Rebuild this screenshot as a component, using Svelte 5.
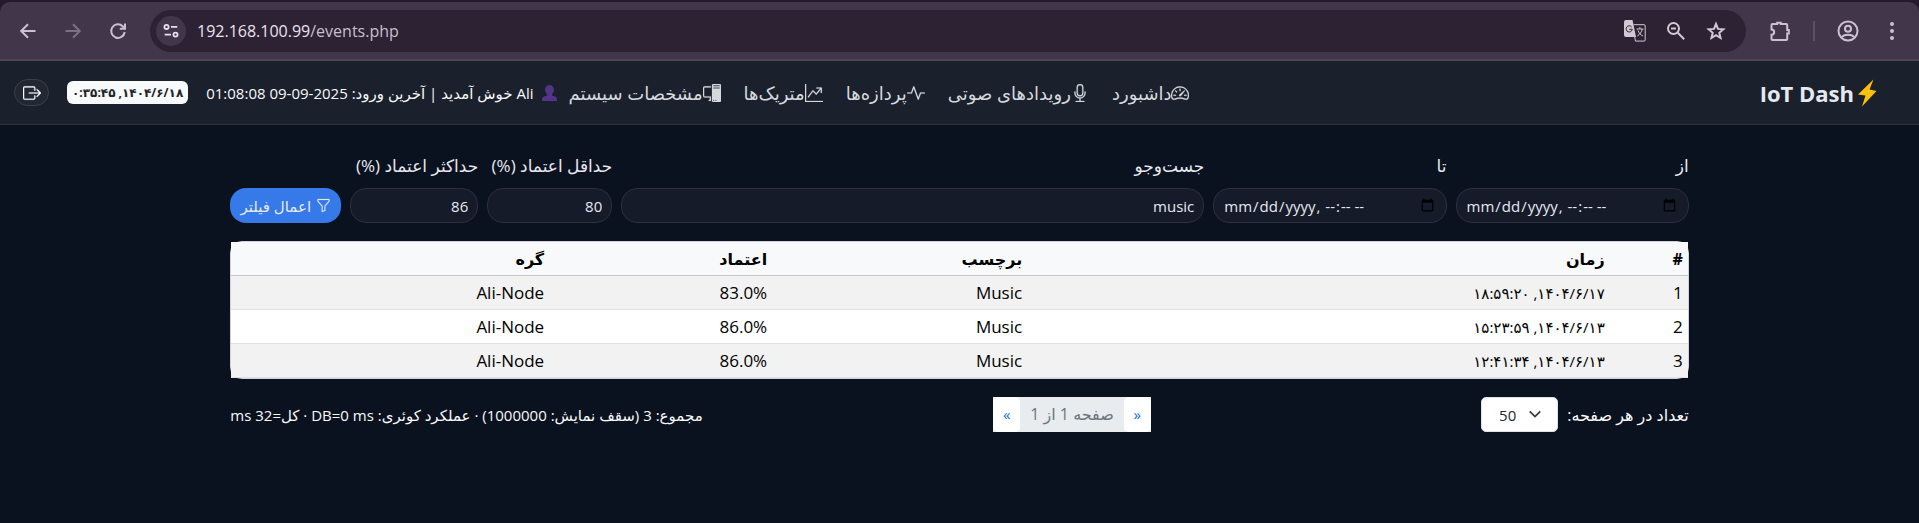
<script>
  const navItems = [
    { label: 'داشبورد', icon: 'speedometer' },
    { label: 'رویدادهای صوتی', icon: 'mic' },
    { label: 'پردازه‌ها', icon: 'activity' },
    { label: 'متریک‌ها', icon: 'graph' },
    { label: 'مشخصات سیستم', icon: 'pc' }
  ];

  const icons = {
    speedometer:
      'M8 4a.5.5 0 0 1 .5.5V6a.5.5 0 0 1-1 0V4.5A.5.5 0 0 1 8 4M3.732 5.732a.5.5 0 0 1 .707 0l.915.914a.5.5 0 1 1-.708.708l-.914-.915a.5.5 0 0 1 0-.707M2 10a.5.5 0 0 1 .5-.5h1.586a.5.5 0 0 1 0 1H2.5A.5.5 0 0 1 2 10m9.5 0a.5.5 0 0 1 .5-.5h1.5a.5.5 0 0 1 0 1H12a.5.5 0 0 1-.5-.5m.754-4.246a.39.39 0 0 0-.527-.02L7.547 9.31a.91.91 0 1 0 1.302 1.258l3.434-4.297a.39.39 0 0 0-.029-.518zM0 10a8 8 0 1 1 15.547 2.661c-.442 1.253-1.845 1.602-2.932 1.25C11.309 13.488 9.475 13 8 13c-1.474 0-3.31.488-4.615.911-1.087.352-2.49.003-2.932-1.25A8 8 0 0 1 0 10m8-7a7 7 0 0 0-6.603 9.329c.203.575.923.876 1.68.63C4.397 12.533 6.358 12 8 12s3.604.532 4.923.96c.757.245 1.477-.056 1.68-.631A7 7 0 0 0 8 3',
    mic: 'M3.5 6.5A.5.5 0 0 1 4 7v1a4 4 0 0 0 8 0V7a.5.5 0 0 1 1 0v1a5 5 0 0 1-4.5 4.975V15h3a.5.5 0 0 1 0 1h-7a.5.5 0 0 1 0-1h3v-2.025A5 5 0 0 1 3 8V7a.5.5 0 0 1 .5-.5M10 8a2 2 0 1 1-4 0V3a2 2 0 1 1 4 0zM8 0a3 3 0 0 0-3 3v5a3 3 0 0 0 6 0V3a3 3 0 0 0-3-3',
    activity:
      'M6 2a.5.5 0 0 1 .47.33L10 12.036l1.53-4.208A.5.5 0 0 1 12 7.5h3.5a.5.5 0 0 1 0 1h-3.15l-1.88 5.17a.5.5 0 0 1-.94 0L6 3.964 4.47 8.171A.5.5 0 0 1 4 8.5H.5a.5.5 0 0 1 0-1h3.15l1.88-5.17A.5.5 0 0 1 6 2',
    graph:
      'M0 0h1v15h15v1H0zm10 3.5a.5.5 0 0 1 .5-.5h4a.5.5 0 0 1 .5.5v4a.5.5 0 0 1-1 0V4.9l-3.613 4.417a.5.5 0 0 1-.74.037L7.06 6.767l-3.656 5.027a.5.5 0 0 1-.808-.588l4-5.5a.5.5 0 0 1 .758-.06l2.609 2.61L13.445 4H10.5a.5.5 0 0 1-.5-.5',
    pc: 'M8 1a1 1 0 0 1 1-1h6a1 1 0 0 1 1 1v14a1 1 0 0 1-1 1H9a1 1 0 0 1-1-1zm1 13.5a.5.5 0 1 0 1 0 .5.5 0 0 0-1 0m2 0a.5.5 0 1 0 1 0 .5.5 0 0 0-1 0M9.5 1a.5.5 0 0 0 0 1h5a.5.5 0 0 0 0-1zM9 3.5a.5.5 0 0 0 .5.5h5a.5.5 0 0 0 0-1h-5a.5.5 0 0 0-.5.5M1.5 2A1.5 1.5 0 0 0 0 3.5v7A1.5 1.5 0 0 0 1.5 12H6v2h-.5a.5.5 0 0 0 0 1H7v-4H1.5a.5.5 0 0 1-.5-.5v-7a.5.5 0 0 1 .5-.5H7V2z',
    logout:
      'M10 12.5a.5.5 0 0 1-.5.5h-8a.5.5 0 0 1-.5-.5v-9a.5.5 0 0 1 .5-.5h8a.5.5 0 0 1 .5.5v2a.5.5 0 0 0 1 0v-2A1.5 1.5 0 0 0 9.5 2h-8A1.5 1.5 0 0 0 0 3.5v9A1.5 1.5 0 0 0 1.5 14h8a1.5 1.5 0 0 0 1.5-1.5v-2a.5.5 0 0 0-1 0zM15.854 8.354a.5.5 0 0 0 0-.708l-3-3a.5.5 0 0 0-.708.708L14.293 7.5H5.5a.5.5 0 0 0 0 1h8.793l-2.147 2.146a.5.5 0 0 0 .708.708z',
    funnel:
      'M1.5 1.5A.5.5 0 0 1 2 1h12a.5.5 0 0 1 .5.5v2a.5.5 0 0 1-.128.334L10 8.692V13.5a.5.5 0 0 1-.342.474l-3 1A.5.5 0 0 1 6 14.5V8.692L1.628 3.834A.5.5 0 0 1 1.5 3.5zm1 .5v1.308l4.372 4.858A.5.5 0 0 1 7 8.5v5.306l2-.666V8.5a.5.5 0 0 1 .128-.334L13.5 3.308V2z'
  };

  const rows = [
    { id: 1, time: '۱۴۰۴/۶/۱۷, ۱۸:۵۹:۲۰', tag: 'Music', confidence: '83.0%', node: 'Ali-Node' },
    { id: 2, time: '۱۴۰۴/۶/۱۳, ۱۵:۲۳:۵۹', tag: 'Music', confidence: '86.0%', node: 'Ali-Node' },
    { id: 3, time: '۱۴۰۴/۶/۱۳, ۱۲:۴۱:۳۴', tag: 'Music', confidence: '86.0%', node: 'Ali-Node' }
  ];

  let search = $state('music');
  let minConfidence = $state('80');
  let maxConfidence = $state('86');
</script>

{#snippet glyph(name)}
  <svg class="glyph" viewBox="0 0 16 16" aria-hidden="true"><path d={icons[name]} /></svg>
{/snippet}

<div class="tabstrip"><div class="tab"></div></div>
<div class="chrome">
  <div class="history">
    <button class="tool" aria-label="Back">
      <svg viewBox="0 0 20 20"><path d="M17.500 10H3.500M10 3.200 3.200 10l6.800 6.800" /></svg>
    </button>
    <button class="tool dim" aria-label="Forward">
      <svg viewBox="0 0 20 20"><path d="M2.500 10h14M10 3.200 16.800 10 10 16.800" /></svg>
    </button>
    <button class="tool" aria-label="Reload">
      <svg viewBox="0 0 20 20"><path d="M16.700 11a6.800 6.800 0 1 1-2-5.800L17 7.500M17 2.500v5.200h-5.200" /></svg>
    </button>
  </div>
  <div class="omnibox">
    <button class="site" aria-label="Site information">
      <svg viewBox="0 0 20 20"><circle cx="5" cy="5.500" r="2.300" /><path d="M10 5.500h7M3 14h7" /><circle cx="15" cy="14" r="2.300" /></svg>
    </button>
    <span class="url">192.168.100.99<i>/events.php</i></span>
    <div class="omni-actions">
      <button class="tool wide" aria-label="Translate">
        <svg viewBox="0 0 22 22">
          <path class="solid" d="M2 0h6.500l3.500 17H2a2 2 0 0 1-2-2V2a2 2 0 0 1 2-2z" />
          <path class="thin" d="M9.500 4.700H20a1.200 1.200 0 0 1 1.200 1.200v14a1.200 1.200 0 0 1-1.200 1.200h-8.500L10.700 17M12.500 9h7M15.900 7v2M18.300 9c-.6 3-2.600 5.500-5 7M14 10.500c1 2.500 2.700 4.500 5 5.500" />
          <path class="cut" d="M7.700 7A3.100 3.100 0 1 0 8.300 9.300H5.300" />
        </svg>
      </button>
      <button class="tool" aria-label="Zoom">
        <svg viewBox="0 0 20 20"><circle cx="7.500" cy="7.500" r="5.500" /><path d="m11.800 11.800 6.400 6.400M5 7.500h5" /></svg>
      </button>
      <button class="tool" aria-label="Bookmark">
        <svg viewBox="0 0 20 20"><path d="m10 3 2 4.900 5.300.4-4 3.500 1.200 5.200-4.500-2.800L5.500 17l1.200-5.200-4-3.500 5.300-.4z" /></svg>
      </button>
    </div>
  </div>
  <div class="chrome-actions">
    <button class="tool wide" aria-label="Extensions">
      <svg viewBox="0 0 22 22"><path d="M3.500 4h4.700V2.800h3.600V4h5.400q1 0 1 1v5h1.600v3.600h-1.600V19q0 1-1 1H3.500q-1 0-1-1v-4.200a2.700 2.700 0 0 0 0-5.400V5q0-1 1-1z" /></svg>
    </button>
    <span class="rule"></span>
    <button class="tool wide" aria-label="Profile">
      <svg viewBox="0 0 22 22"><circle cx="11" cy="11" r="9.500" /><circle cx="11" cy="8.800" r="3" /><path d="M4.500 17c3.500-3 9.500-3 13 0" /></svg>
    </button>
    <button class="tool wide" aria-label="Menu">
      <svg viewBox="0 0 22 22"><g class="solid"><circle cx="11" cy="4" r="2" /><circle cx="11" cy="11" r="2" /><circle cx="11" cy="18" r="2" /></g></svg>
    </button>
  </div>
</div>

<div class="page" dir="rtl">
  <nav class="navbar">
    <a class="brand" href="#home">
      <svg viewBox="0 0 20 28" aria-hidden="true"><path d="M16.500.500 1 15.500l7.500 1L5 27.500 19.500 12l-7-1.500z" /></svg><span dir="ltr">IoT Dash</span>
    </a>
    <div class="links">
      {#each navItems as item}
        <a href="#{item.icon}">{@render glyph(item.icon)}<span>{item.label}</span></a>
      {/each}
    </div>
    <div class="session">
      <span class="welcome">
        <svg viewBox="0 0 15 20" preserveAspectRatio="none" aria-hidden="true"><ellipse cx="7.500" cy="6" rx="4.500" ry="6" /><path d="M5 10h5v3l3 1.500q2 1 2 3.500v2H0v-2q0-2.500 2-3.500L5 13z" /></svg>
        <span>Ali خوش آمدید | آخرین ورود: 2025-09-09 01:08:08</span>
      </span>
      <span class="clock">۱۴۰۴/۶/۱۸, ۰:۳۵:۴۵</span>
      <button class="logout" aria-label="خروج">{@render glyph('logout')}</button>
    </div>
  </nav>

  <main>
    <form class="filters" onsubmit={(e) => e.preventDefault()}>
      <div class="field"><label for="from">از</label><input id="from" type="datetime-local" dir="ltr" /></div>
      <div class="field"><label for="to">تا</label><input id="to" type="datetime-local" dir="ltr" /></div>
      <div class="field"><label for="search">جست‌وجو</label><input id="search" type="text" bind:value={search} /></div>
      <div class="field"><label for="min">حداقل اعتماد (%)</label><input id="min" type="text" inputmode="numeric" bind:value={minConfidence} /></div>
      <div class="field"><label for="max">حداکثر اعتماد (%)</label><input id="max" type="text" inputmode="numeric" bind:value={maxConfidence} /></div>
      <button class="apply" type="submit">{@render glyph('funnel')}<span>اعمال فیلتر</span></button>
    </form>

    <div class="table-wrap">
      <table>
        <colgroup><col class="c-id" /><col class="c-time" /><col class="c-tag" /><col class="c-conf" /><col /></colgroup>
        <thead>
          <tr><th>#</th><th>زمان</th><th>برچسب</th><th>اعتماد</th><th>گره</th></tr>
        </thead>
        <tbody>
          {#each rows as row}
            <tr>
              <td>{row.id}</td>
              <td class="time">{row.time}</td>
              <td>{row.tag}</td>
              <td><span dir="ltr">{row.confidence}</span></td>
              <td>{row.node}</td>
            </tr>
          {/each}
        </tbody>
      </table>
    </div>

    <div class="footer">
      <div class="per-page">
        <label for="per">تعداد در هر صفحه:</label>
        <span class="select">
          <select id="per"><option>50</option></select>
          <svg viewBox="0 0 16 16" aria-hidden="true"><path d="m2 5 6 6 6-6" /></svg>
        </span>
      </div>
      <div class="pager">
        <a href="#prev">«</a>
        <span>صفحه 1 از 1</span>
        <a href="#next">»</a>
      </div>
      <div class="summary">مجموع: 3 (سقف نمایش: 1000000) · عملکرد کوئری: DB=0 ms · کل=32 ms</div>
    </div>
  </main>
</div>

<style>
  :global(body) {
    margin: 0;
    background: #0b121f;
  }
  :global(#app) {
    font-family: 'Open Sans', 'Noto Sans', 'DejaVu Sans', sans-serif;
    font-size: 16px;
    line-height: 24px;
    color: #e6e9f0;
  }
  button,
  input,
  select {
    font: inherit;
    color: inherit;
    margin: 0;
  }
  button {
    border: 0;
    padding: 0;
    background: none;
  }
  a {
    color: inherit;
    text-decoration: none;
  }

  .tabstrip {
    height: 2px;
    background: #241a2c;
  }
  .tab {
    height: 2px;
    width: 16%;
    margin-left: 49%;
    background: #42374a;
    border-radius: 2px;
  }
  .chrome {
    display: flex;
    align-items: center;
    box-sizing: border-box;
    height: 59px;
    padding: 0 16px 0 18px;
    background: #42374a;
    border-bottom: 2px solid #50454e;
    border-radius: 10px 10px 0 0;
    box-shadow: 0 -8px 0 4px #241a2c;
  }
  .history {
    display: flex;
    gap: 25px;
    margin-right: 22px;
  }
  .tool {
    display: flex;
    width: 20px;
    height: 20px;
    color: #cdbfd6;
  }
  .tool.wide {
    width: 22px;
    height: 22px;
  }
  .tool svg,
  .site svg {
    width: 100%;
    height: 100%;
    fill: none;
    stroke: currentColor;
    stroke-width: 2;
  }
  .tool svg .solid {
    fill: currentColor;
    stroke: none;
  }
  .tool svg .thin {
    stroke-width: 1;
  }
  .tool svg .cut {
    stroke: #2c2234;
    stroke-width: 1;
  }
  .tool.dim {
    color: #7c7184;
  }
  .omnibox {
    flex: 1;
    display: flex;
    align-items: center;
    height: 42px;
    box-sizing: border-box;
    padding: 0 20px 0 6px;
    border-radius: 21px;
    background: #2c2234;
  }
  .site {
    box-sizing: border-box;
    width: 30px;
    height: 30px;
    padding: 6px;
    border-radius: 15px;
    background: #42374a;
    color: #e8dff0;
  }
  .url {
    flex: 1;
    margin-left: 11px;
    font-size: 16px;
    color: #ebe4ee;
  }
  .url i {
    font-style: normal;
    color: #c9bfcd;
  }
  .omni-actions {
    display: flex;
    align-items: center;
    gap: 20px;
  }
  .omni-actions .tool {
    color: #d2c9d2;
  }
  .chrome-actions {
    display: flex;
    align-items: center;
    gap: 22px;
    padding-left: 23px;
  }
  .rule {
    width: 2px;
    height: 20px;
    background: #5c5163;
  }

  .navbar {
    display: flex;
    align-items: center;
    box-sizing: border-box;
    height: 64px;
    padding: 0 42px 0 14px;
    background: #1a212c;
    border-bottom: 1px solid #2c333e;
  }
  .brand {
    display: flex;
    align-items: center;
    gap: 3px;
    font-size: 22px;
    font-weight: 700;
  }
  .brand svg {
    width: 20px;
    height: 28px;
    fill: #ffc107;
  }
  .links {
    display: flex;
    flex: 1;
    justify-content: flex-end;
    gap: 23px;
    font-size: 18px;
    color: #d5d9df;
  }
  .links a {
    display: flex;
    align-items: center;
  }
  .glyph {
    width: 18px;
    height: 18px;
    fill: currentColor;
    stroke: currentColor;
    stroke-width: 0.2;
  }
  .session {
    display: flex;
    align-items: center;
    gap: 18px;
    padding-right: 12px;
    font-size: 15px;
    color: #f8f9fa;
  }
  .welcome {
    display: flex;
    align-items: center;
    gap: 8px;
  }
  .welcome svg {
    width: 15px;
    height: 16px;
    fill: #533588;
  }
  .clock {
    padding: 0 5px;
    border-radius: 6px;
    background: #f8f9fa;
    color: #212529;
    font-size: 12px;
    font-weight: 700;
    line-height: 23px;
  }
  .logout {
    display: flex;
    align-items: center;
    justify-content: center;
    width: 35px;
    height: 27px;
    border: 1px solid #3b414b;
    border-radius: 14px;
    background: #212733;
  }

  main {
    padding: 28px 12% 0;
  }
  .filters {
    display: grid;
    grid-template-columns: 2fr 2fr 5fr 125px 128px 111px;
    gap: 9px;
    align-items: end;
  }
  .field {
    display: flex;
    flex-direction: column;
    gap: 9px;
    min-width: 0;
  }
  .field label {
    line-height: 26px;
    font-size: 17px;
    white-space: nowrap;
  }
  .field input {
    box-sizing: border-box;
    width: 100%;
    height: 35px;
    padding: 4px 9px;
    border: 1px solid #2a303c;
    border-radius: 16px;
    background: #151b28;
    font-size: 15px;
  }
  .apply {
    display: flex;
    align-items: center;
    justify-content: center;
    gap: 5px;
    height: 35px;
    border-radius: 16px;
    background: #3679e9;
    font-size: 15px;
  }
  .apply .glyph {
    width: 15px;
    height: 15px;
  }

  .table-wrap {
    margin-top: 18px;
    border: 1px solid #ced4da;
    border-radius: 12px;
  }
  table {
    width: 100%;
    table-layout: fixed;
    border-collapse: collapse;
    background: #fff;
    color: #000;
  }
  .c-id {
    width: 78px;
  }
  .c-time {
    width: 40%;
  }
  .c-tag {
    width: 255px;
  }
  .c-conf {
    width: 223px;
  }
  th,
  td {
    height: 33px;
    padding: 0 5px;
    border-bottom: 1px solid #dee2e6;
    text-align: right;
    font-size: 17px;
  }
  th {
    background: #f8f9fa;
    border-bottom-color: #c6c7c8;
    font-size: 16px;
    font-weight: 700;
  }
  .time {
    font-size: 15px;
  }
  tbody tr:nth-child(odd) {
    background: #f2f2f2;
  }

  .footer {
    display: flex;
    justify-content: space-between;
    align-items: center;
    margin-top: 18px;
    font-size: 15px;
    color: #f8f9fa;
  }
  .per-page {
    display: flex;
    align-items: center;
    gap: 9px;
    font-size: 16px;
  }
  .select {
    position: relative;
    display: flex;
  }
  .select select {
    appearance: none;
    width: 77px;
    height: 35px;
    padding: 0 41px 0 18px;
    border: 1px solid #dee2e6;
    border-radius: 5px;
    background: #fff;
    color: #212529;
    font-size: 15px;
  }
  .select svg {
    position: absolute;
    top: 10px;
    right: 16px;
    width: 14px;
    height: 14px;
    fill: none;
    stroke: #343a40;
    stroke-width: 2;
    pointer-events: none;
  }
  .pager {
    display: flex;
    margin-right: 40px;
    background: #e9ecef;
    color: #6c757d;
    font-size: 16px;
    line-height: 35px;
  }
  .pager a {
    width: 27px;
    border-radius: 5px;
    background: #fff;
    color: #0d6efd;
    font-size: 15px;
    text-align: center;
  }
  .pager span {
    padding: 0 10px;
  }
</style>
